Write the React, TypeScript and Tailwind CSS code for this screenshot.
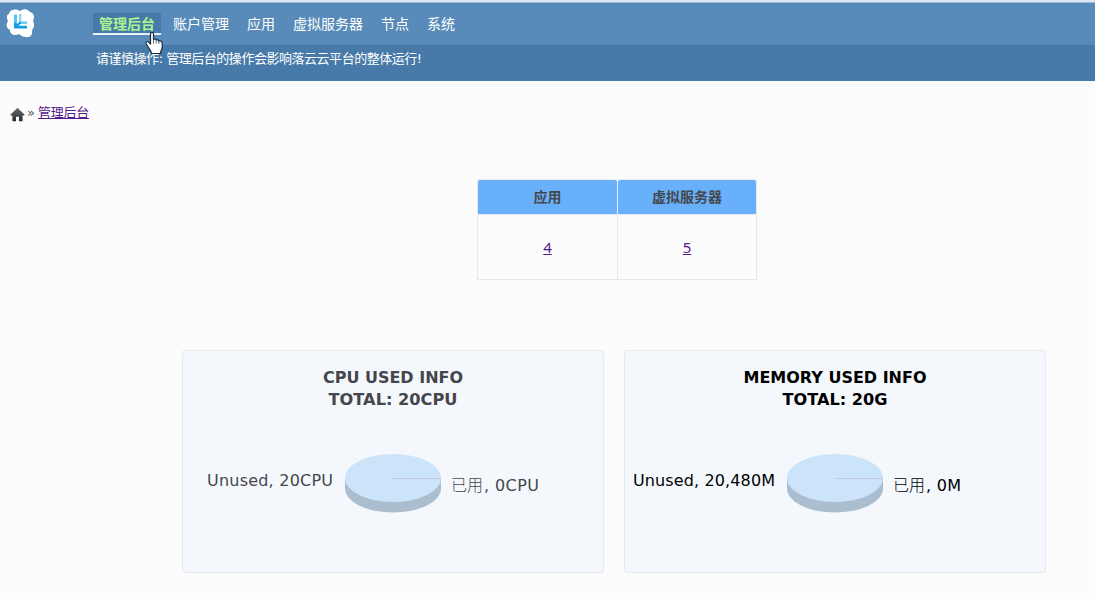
import React from "react";

const navItems = ["账户管理", "应用", "虚拟服务器", "节点", "系统"];

function Logo() {
  return (
    <svg className="ml-[6px] mt-[4px] h-[32px] w-[29px] shrink-0" viewBox="0 0 29 32">
      <path
        d="M7 3C10 2 12 3 14 4C18 1 22 2 24 5C28 6 29 10 27 14C29 18 28 21 26 23C27 28 24 31 20 30C17 30 15 29 13 27C9 29 4 28 4 23C0 21 0 17 2 14C0 10 1 7 3 7C3 5 5 3 7 3Z"
        fill="#fff"
      />
      <path d="M8 7.500H11V18H8Z" fill="#58c5f3" />
      <path d="M13 7H15.500V14.500L13 17Z" fill="#8bd9f8" />
      <path d="M15.500 14.500H21V17H13Z" fill="#68cdf5" />
      <path d="M8 14.500L10.800 17L14 14.500L15.500 16L12.500 18.700H21V21.500H8Z" fill="#149ee5" />
    </svg>
  );
}

function HandPointer() {
  return (
    <svg className="absolute left-[145px] top-[32px] h-[23px] w-[19px]" viewBox="0 0 19 23">
      <path
        d="M5.5 2C5.5 .8 6.2 .5 7 .5S8.500 .9 8.500 2V7.500C9 6.600 11 6.900 11.200 8.100C12 7.300 13.700 7.900 13.800 9.100C15.500 8.500 17.200 9.400 17.200 11.500V15C17.200 17.500 15.500 18.500 15.500 21.500H6.500C6.500 19 4.500 17.500 3.500 15.500C2.500 13.500 .8 12.200 1 10.700C1.300 9.200 3 9.200 4 10.300L5.500 12Z"
        fill="#fff"
        stroke="#182b3f"
        strokeWidth="1.200"
        strokeLinejoin="round"
      />
      <path d="M8.500 8V11.500M11.200 8.500V11.500M13.800 9.500V12" stroke="#56616b" strokeWidth=".9" fill="none" />
    </svg>
  );
}

function HomeIcon() {
  return (
    <svg className="h-[15px] w-[15px]" viewBox="0 0 15 15">
      <defs>
        <linearGradient id="home" x1="0" y1="0" x2="0" y2="1">
          <stop offset="0" stopColor="#6a7276" />
          <stop offset="1" stopColor="#242a2d" />
        </linearGradient>
      </defs>
      <path d="M7.500 .8L14.700 7.800L14 8.600H12.600V14.200H9V9.800H6V14.200H2.400V8.600H1L.3 7.800Z" fill="url(#home)" />
    </svg>
  );
}

type UsageProps = {
  title: string;
  total: string;
  titleWidth: number;
  totalWidth: number;
  unused: string;
  unusedX: number;
  unusedWidth: number;
  used: string;
  usedWidth: number;
  color: string;
};

function UsageCard(p: UsageProps) {
  return (
    <section className="h-[223px] w-[422px] rounded-[3px] border border-[#e6ebf2] bg-[#f4f8fd]">
      <svg className="block h-[221px] w-[420px]" viewBox="1 1 420 221" fill={p.color}>
        <g className="font-['DejaVu_Sans','Noto_Sans_CJK_SC',sans-serif] text-[16px]">
          <g fontWeight="700" textAnchor="middle">
            <text x="211" y="33" textLength={p.titleWidth} lengthAdjust="spacingAndGlyphs">{p.title}</text>
            <text x="211" y="55" textLength={p.totalWidth} lengthAdjust="spacingAndGlyphs">{p.total}</text>
          </g>
          <text x={p.unusedX} y="136" textLength={p.unusedWidth} lengthAdjust="spacing">{p.unused}</text>
          <text x="269" y="141" fontWeight="300">已用</text>
          <text x="302" y="141" textLength={p.usedWidth} lengthAdjust="spacing">{p.used}</text>
        </g>
        <path d="M163 128V138.500A48 24 0 0 0 259 138.500V128Z" fill="#abbed0" />
        <ellipse cx="211" cy="128" rx="48" ry="24" fill="#cce4fa" />
        <path d="M211 128.500H259" stroke="#bfc5e2" />
      </svg>
    </section>
  );
}

export default function App() {
  return (
    <div className="relative h-[599px] w-[1095px] overflow-hidden bg-[#fcfcfc] font-['DejaVu_Sans','Noto_Sans_CJK_SC',sans-serif]">
      <header>
        <div className="h-[3px] border-b border-[#a3b7ca] bg-[#dce8f6]" />
        <div className="flex h-[42px] items-start bg-[#588bb9]">
          <Logo />
          <nav className="ml-[58px] mt-[10px] flex items-start gap-[18px] text-[14px] leading-[22px] text-white">
            <a className="-mr-[6px] h-[22px] w-[68px] rounded-t-[2px] border-b-2 border-[#e9f2fa] bg-[#477aa8] text-center font-bold text-[#a9f58e]">管理后台</a>
            {navItems.map((item) => <a key={item}>{item}</a>)}
          </nav>
        </div>
        <div className="h-[36px] bg-[#477aa9] pl-[96px] pt-[4px] text-[13px] leading-[20px] tracking-[-0.47px] text-white">
          请谨慎操作: 管理后台的操作会影响落云云平台的整体运行!
        </div>
      </header>
      <HandPointer />

      <main>
        <div className="flex h-[98px] items-start pl-[10px] pt-[22px] text-[13px] leading-[20px]">
          <span className="mt-[4px]"><HomeIcon /></span>
          <span className="ml-[2px] w-[11px] text-[#555]">»</span>
          <a className="tracking-[-0.25px] text-[#551a8b] underline">管理后台</a>
        </div>

        <table className="ml-[477px] h-[101px] w-[280px] table-fixed border-separate border-spacing-0 text-center">
          <colgroup>
            <col className="w-[141px]" />
            <col className="w-[139px]" />
          </colgroup>
          <thead className="text-[14px] leading-[20px] text-[#44484d]">
            <tr className="h-[36px]">
              <th className="border border-[#e9edf1] p-0"><div className="h-[34px] rounded-t-[2px] bg-[#69b0fa] pt-[7px]">应用</div></th>
              <th className="border-y border-r border-[#e9edf1] p-0"><div className="h-[34px] rounded-t-[2px] bg-[#69b0fa] pt-[7px]">虚拟服务器</div></th>
            </tr>
          </thead>
          <tbody className="font-['Noto_Sans',sans-serif] text-[15px] text-[#551a8b] underline">
            <tr className="h-[65px]">
              <td className="border-x border-b border-[#e8e8e8] p-0">4</td>
              <td className="border-r border-b border-[#e8e8e8] p-0">5</td>
            </tr>
          </tbody>
        </table>

        <div className="ml-[182px] mt-[70px] flex gap-[20px]">
          <UsageCard title="CPU USED INFO" total="TOTAL: 20CPU" titleWidth={140} totalWidth={129} unused="Unused, 20CPU" unusedX={25} unusedWidth={126} used=", 0CPU" usedWidth={55} color="#45464c" />
          <UsageCard title="MEMORY USED INFO" total="TOTAL: 20G" titleWidth={183} totalWidth={105} unused="Unused, 20,480M" unusedX={9} unusedWidth={142} used=", 0M" usedWidth={35} color="#000000" />
        </div>
      </main>
    </div>
  );
}
